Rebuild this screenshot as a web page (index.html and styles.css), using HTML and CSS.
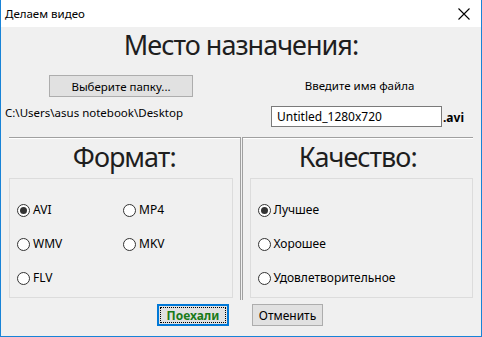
FILE: index.html
```html
<!DOCTYPE html>
<html lang="ru">
<head>
<meta charset="utf-8">
<title>Делаем видео</title>
<link rel="stylesheet" href="styles.css">
</head>
<body>
<div class="window">
  <div class="titlebar">
    <span class="title">Делаем видео</span>
    <svg class="close" width="12" height="12" viewBox="0 0 12 12"><path d="M0.5 0.5 L11.5 11.5 M11.5 0.5 L0.5 11.5" stroke="#000" stroke-width="1.1" fill="none"/></svg>
  </div>
  <div class="content">
    <h1 class="big-title">Место назначения:</h1>
    <div class="dest">
      <div class="dest-left">
        <button class="btn choose">Выберите папку...</button>
        <div class="path">C:\Users\asus notebook\Desktop</div>
      </div>
      <div class="dest-right">
        <div class="file-label">Введите имя файла</div>
        <div class="file-row">
          <div class="input">Untitled_1280x720</div>
          <span class="ext">.avi</span>
        </div>
      </div>
    </div>
    <div class="panels">
      <section class="panel panel-left">
        <h2 class="panel-title">Формат:</h2>
        <div class="group group-format">
          <label class="radio"><span class="dot checked"></span>AVI</label>
          <label class="radio"><span class="dot"></span>MP4</label>
          <label class="radio"><span class="dot"></span>WMV</label>
          <label class="radio"><span class="dot"></span>MKV</label>
          <label class="radio"><span class="dot"></span>FLV</label>
        </div>
      </section>
      <section class="panel panel-right">
        <h2 class="panel-title">Качество:</h2>
        <div class="group group-quality">
          <label class="radio"><span class="dot checked"></span>Лучшее</label>
          <label class="radio"><span class="dot"></span>Хорошее</label>
          <label class="radio"><span class="dot"></span>Удовлетворительное</label>
        </div>
      </section>
    </div>
    <div class="actions">
      <button class="btn go"><span class="focus">Поехали</span></button>
      <button class="btn cancel">Отменить</button>
    </div>
  </div>
</div>
</body>
</html>
```
FILE: styles.css
```css
* { box-sizing: border-box; }
html, body { margin: 0; padding: 0; }
body {
  font-family: "Noto Sans", "Open Sans", sans-serif;
  font-size: 11.5px;
  color: #000;
  background: #f0f0f0;
}
.window {
  width: 482px;
  height: 337px;
  border: 1px solid #1883d7;
  border-top: none;
  background: #f0f0f0;
  display: flex;
  flex-direction: column;
  overflow: hidden;
}
.titlebar {
  height: 27px;
  background: #fff;
  display: flex;
  align-items: center;
  justify-content: space-between;
  padding: 0 11px 0 4px;
  margin: 0 -1px;
  border-left: 1px solid #fff;
  border-right: 1px solid #fff;
}
.title { font-size: 11.5px; line-height: 14px; }
.close { display: block; }
.content { flex: 1; display: flex; flex-direction: column; }
.big-title {
  margin: 0;
  text-align: center;
  font-weight: normal;
  font-size: 27px;
  line-height: 36px;
  color: #1e1e1e;
  letter-spacing: -1px;
}
.dest {
  display: grid;
  grid-template-columns: 239px 1fr;
  height: 74px;
}
.dest-left { padding-top: 12px; }
.btn {
  font-family: inherit;
  font-size: 11.5px;
  color: #000;
  background: #e1e1e1;
  border: 1px solid #adadad;
  padding: 0;
  height: 22px;
  display: flex;
  align-items: center;
  justify-content: center;
}
.choose { width: 144px; margin-left: 48px; }
.path { margin: 8px 0 0 4px; line-height: 16px; }
.dest-right { padding-top: 15px; }
.file-label { text-align: center; margin-left: -2px; line-height: 16px; }
.file-row { display: flex; align-items: center; margin-top: 12px; padding-left: 31px; }
.input {
  width: 171px;
  height: 21px;
  background: #fff;
  border: 1px solid #7a7a7a;
  padding-left: 5px;
  line-height: 19px;
  font-size: 12px;
}
.ext { font-weight: bold; margin-left: 1px; padding-top: 2px; font-size: 12px; }
.panels {
  display: flex;
  height: 163px;
  padding-left: 8px;
  padding-right: 8px;
}
.panel {
  flex: 1;
  border-top: 1px solid #a0a0a0;
  box-shadow: inset 0 1px 0 #fff;
  display: flex;
  flex-direction: column;
}
.panel-left { border-right: 1px solid #a0a0a0; margin-right: 1px; }
.panel-right { border-left: 1px solid #a0a0a0; }
.panel-title {
  margin: 0;
  font-weight: normal;
  font-size: 27px;
  line-height: 38px;
  text-align: center;
  color: #1e1e1e;
  letter-spacing: -1px;
}
.group {
  margin-top: 2px;
  height: 120px;
  border: 1px solid #dcdcdc;
  display: grid;
  row-gap: 0;
  padding-top: 23px;
  grid-auto-rows: 34px;
  align-content: start;
  font-size: 12px;
}
.panel-left .group { margin-right: 7px; }
.panel-right .group { margin-left: 7px; }
.group-format { grid-template-columns: 106px 1fr; padding-left: 7px; }
.group-quality { grid-template-columns: 1fr; padding-left: 7px; }
.radio {
  display: flex;
  align-items: center;
  height: 16px;
  line-height: 16px;
  color: #000;
}
.dot {
  width: 13px;
  height: 13px;
  border: 1px solid #333;
  border-radius: 50%;
  background: #fff;
  margin-right: 3px;
  position: relative;
  flex: none;
}
.dot.checked::after {
  content: "";
  position: absolute;
  left: 2px;
  top: 2px;
  width: 7px;
  height: 7px;
  border-radius: 50%;
  background: #333;
}
.actions {
  display: flex;
  gap: 23px;
  padding-left: 156px;
  padding-top: 4px;
}
.go {
  width: 72px;
  border: 2px solid #0078d7;
  padding: 1px;
}
.go .focus {
  width: 100%;
  height: 100%;
  border: 1px dotted #000;
  display: flex;
  align-items: center;
  justify-content: center;
  font-weight: bold;
  font-size: 12px;
  color: #197a19;
}
.cancel { width: 71px; font-size: 12px; }
```
